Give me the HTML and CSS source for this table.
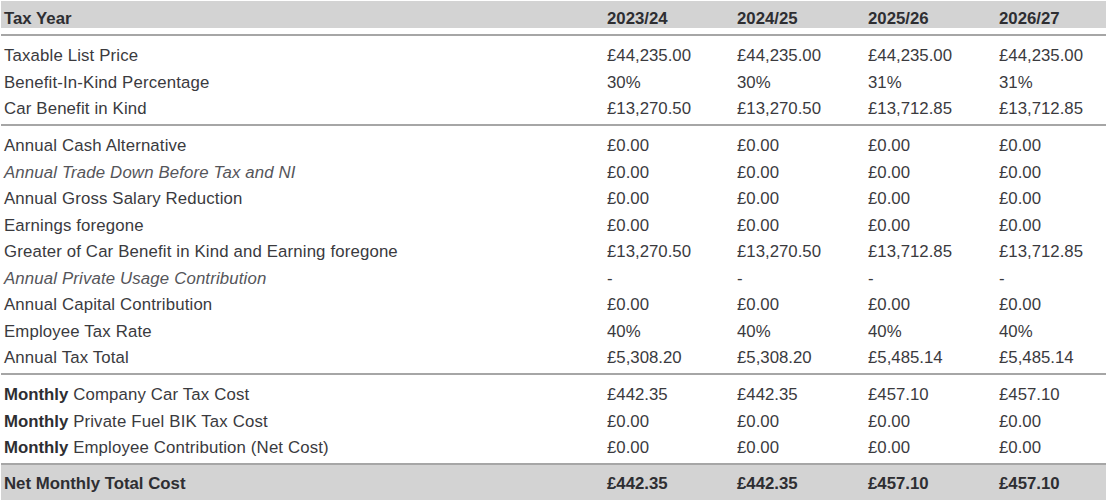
FILE: index.html
```html
<!DOCTYPE html>
<html>
<head>
<meta charset="utf-8">
<link rel="stylesheet" href="styles.css">
</head>
<body>
<div class="tax">
  <div class="row head">
    <div class="lbl">Tax Year</div><div>2023/24</div><div>2024/25</div><div>2025/26</div><div>2026/27</div>
  </div>
  <div class="section">
    <div class="row"><div class="lbl">Taxable List Price</div><div>£44,235.00</div><div>£44,235.00</div><div>£44,235.00</div><div>£44,235.00</div></div>
    <div class="row"><div class="lbl">Benefit-In-Kind Percentage</div><div>30%</div><div>30%</div><div>31%</div><div>31%</div></div>
    <div class="row"><div class="lbl">Car Benefit in Kind</div><div>£13,270.50</div><div>£13,270.50</div><div>£13,712.85</div><div>£13,712.85</div></div>
  </div>
  <div class="section">
    <div class="row"><div class="lbl">Annual Cash Alternative</div><div>£0.00</div><div>£0.00</div><div>£0.00</div><div>£0.00</div></div>
    <div class="row"><div class="lbl em">Annual Trade Down Before Tax and NI</div><div>£0.00</div><div>£0.00</div><div>£0.00</div><div>£0.00</div></div>
    <div class="row"><div class="lbl">Annual Gross Salary Reduction</div><div>£0.00</div><div>£0.00</div><div>£0.00</div><div>£0.00</div></div>
    <div class="row"><div class="lbl">Earnings foregone</div><div>£0.00</div><div>£0.00</div><div>£0.00</div><div>£0.00</div></div>
    <div class="row"><div class="lbl">Greater of Car Benefit in Kind and Earning foregone</div><div>£13,270.50</div><div>£13,270.50</div><div>£13,712.85</div><div>£13,712.85</div></div>
    <div class="row"><div class="lbl em">Annual Private Usage Contribution</div><div>-</div><div>-</div><div>-</div><div>-</div></div>
    <div class="row"><div class="lbl">Annual Capital Contribution</div><div>£0.00</div><div>£0.00</div><div>£0.00</div><div>£0.00</div></div>
    <div class="row"><div class="lbl">Employee Tax Rate</div><div>40%</div><div>40%</div><div>40%</div><div>40%</div></div>
    <div class="row"><div class="lbl">Annual Tax Total</div><div>£5,308.20</div><div>£5,308.20</div><div>£5,485.14</div><div>£5,485.14</div></div>
  </div>
  <div class="section">
    <div class="row"><div class="lbl"><b>Monthly</b> Company Car Tax Cost</div><div>£442.35</div><div>£442.35</div><div>£457.10</div><div>£457.10</div></div>
    <div class="row"><div class="lbl"><b>Monthly</b> Private Fuel BIK Tax Cost</div><div>£0.00</div><div>£0.00</div><div>£0.00</div><div>£0.00</div></div>
    <div class="row"><div class="lbl"><b>Monthly</b> Employee Contribution (Net Cost)</div><div>£0.00</div><div>£0.00</div><div>£0.00</div><div>£0.00</div></div>
  </div>
  <div class="row foot">
    <div class="lbl">Net Monthly Total Cost</div><div>£442.35</div><div>£442.35</div><div>£457.10</div><div>£457.10</div>
  </div>
</div>
</body>
</html>
```

FILE: styles.css
```css
html, body {
  margin: 0;
  padding: 0;
  background: #ffffff;
}
body {
  padding: 1px 0 0 1px;
  font-family: "Liberation Sans", Arial, sans-serif;
  font-size: 16.8px;
  color: #3a3a3e;
}
.tax {
  width: 1105px;
}
.row {
  display: grid;
  grid-template-columns: 606px 130px 131px 131px 1fr;
  height: 26.5px;
  line-height: 26.5px;
  white-space: nowrap;
}
.lbl {
  padding-left: 3px;
  letter-spacing: 0.15px;
}
.em {
  font-style: italic;
  color: #55555a;
}
.head {
  height: 18px;
  line-height: 18px;
  padding-top: 9px;
  background: #d3d3d3;
  font-weight: bold;
  color: #2e2e32;
  margin-bottom: 6px;
}
.head .lbl {
  letter-spacing: 0;
}
.section {
  border-top: 2px solid #a6a6a6;
  padding: 7px 0 1.5px;
}
.foot {
  border-top: 2px solid #a6a6a6;
  background: #d3d3d3;
  height: 35px;
  line-height: 38px;
  font-weight: bold;
  color: #2e2e32;
}
.foot .lbl {
  letter-spacing: 0;
}
b {
  color: #2e2e32;
  letter-spacing: 0;
}
```
